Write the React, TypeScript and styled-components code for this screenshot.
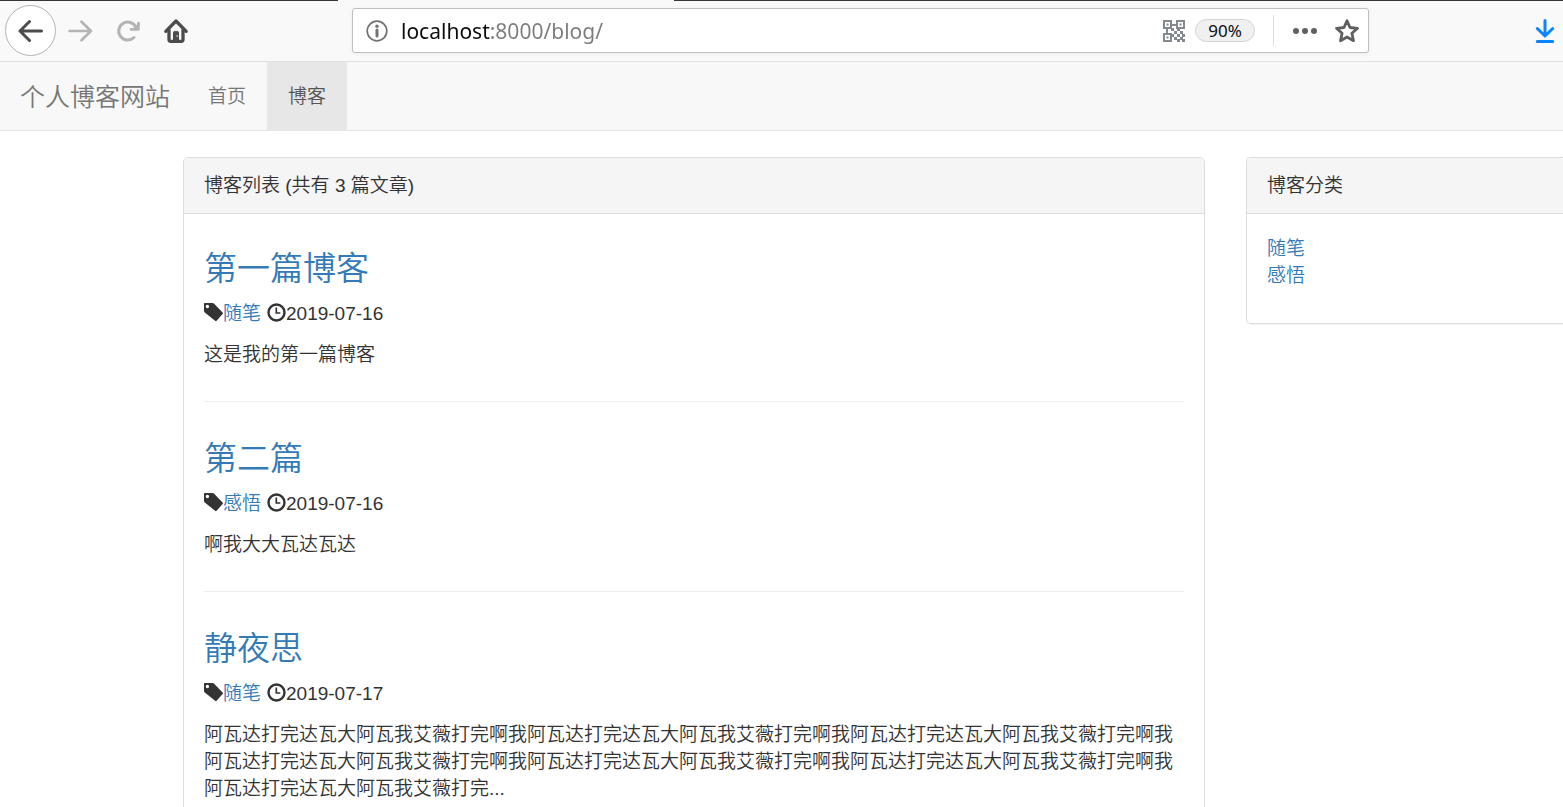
import React from "react";
import styled, { createGlobalStyle } from "styled-components";

const GlobalStyle = createGlobalStyle`
  *, *::before, *::after { box-sizing: border-box; }
  body {
    margin: 0;
    background: #fff;
    color: #333;
    font-family: "Liberation Sans", "Noto Sans CJK SC", sans-serif;
    font-size: 19px;
    font-weight: 350;
    line-height: 27px;
  }
  a { color: #337ab7; text-decoration: none; }
  a:hover { text-decoration: underline; }
`;

const Window = styled.div`
  display: flex;
  flex-direction: column;
  height: 100vh;
  overflow: hidden;
`;

const TabEdge = styled.div`
  display: grid;
  grid-template-columns: 338px 336px 1fr;
  flex: none;
  height: 1px;
  background: #f9f9fa;
`;

const TabEdgeDark = styled.span<{ $column: number }>`
  grid-column: ${(p) => p.$column};
  background: #38353a;
`;

const Toolbar = styled.header`
  display: flex;
  align-items: center;
  flex: none;
  height: 61px;
  padding: 0 5px 1px;
  background: #f9f9fa;
  border-bottom: 1px solid #e0e0e1;
`;

const IconButton = styled.button<{ $tone?: string }>`
  display: flex;
  align-items: center;
  justify-content: center;
  flex: none;
  width: 26px;
  height: 26px;
  padding: 0;
  border: 0;
  background: none;
  color: ${(p) => p.$tone ?? "#4c4c4f"};
`;

const BackButton = styled(IconButton)`
  width: 51px;
  height: 51px;
  background: #fff;
  border: 1px solid #b4b4b5;
  border-radius: 50%;
`;

const NavButtons = styled.div`
  display: flex;
  align-items: center;
  gap: 22px;
  margin-left: 11px;
`;

const AddressBar = styled.div`
  display: flex;
  align-items: center;
  flex: 1;
  height: 45px;
  margin: 0 163px;
  padding: 0 8px 0 11px;
  background: #fff;
  border: 1px solid #bfbfc0;
  border-radius: 3px;
  box-shadow: 0 1px 4px rgba(0, 0, 0, 0.06);
`;

const AddressInput = styled.input`
  flex: 1;
  min-width: 0;
  height: 32px;
  margin-left: 11px;
  padding: 0;
  border: 0;
  outline: 0;
  font: 21px/32px "Noto Sans", sans-serif;
  color: transparent;
  background: linear-gradient(to right, #0c0c0d 89px, #7c7c7d 89px);
  -webkit-background-clip: text;
  background-clip: text;
`;

const ZoomButton = styled.button`
  width: 60px;
  height: 23px;
  margin: 0 18px 0 10px;
  padding: 0;
  border: 1px solid #d4d4d5;
  border-radius: 12px;
  background: #f0f0f1;
  color: #0c0c0d;
  font: 17px/21px "Noto Sans", sans-serif;
`;

const Divider = styled.span`
  width: 1px;
  height: 31px;
  margin-right: 18px;
  background: #dededf;
`;

const BarActions = styled.div`
  display: flex;
  gap: 16px;
`;

const SiteNav = styled.nav`
  display: flex;
  flex: none;
  height: 69px;
  background: #f8f8f8;
  border-bottom: 1px solid #e7e7e7;
  line-height: 70px;
`;

const Brand = styled.a`
  padding: 0 17px 0 20px;
  font-size: 25px;
  && { color: #777; }
`;

const NavLink = styled.a<{ $active?: boolean }>`
  height: 68px;
  padding: 0 21px;
  background: ${(p) => (p.$active ? "#e7e7e7" : "transparent")};
  && { color: ${(p) => (p.$active ? "#555" : "#777")}; }
`;

const Content = styled.main`
  display: grid;
  grid-template-columns: minmax(0, 1fr) 317px;
  align-items: start;
  gap: 41px;
  flex: 1;
  min-height: 0;
  padding: 26px 0 0 183px;
`;

const Panel = styled.section<{ $bleed?: boolean }>`
  border: 1px solid #ddd;
  border-radius: 5px;
  box-shadow: 0 1px 1px rgba(0, 0, 0, 0.05);
  ${(p) => p.$bleed && "border-right: 0; border-radius: 5px 0 0 5px;"}
`;

const PanelHeading = styled.h1`
  margin: 0;
  padding: 14px 20px;
  background: #f5f5f5;
  border-bottom: 1px solid #ddd;
  border-radius: 4px 4px 0 0;
  font-size: 19px;
  font-weight: 350;
`;

const PanelBody = styled.div`
  padding: 35px 20px 40px;
`;

const CategoryList = styled.ul`
  margin: 0;
  padding: 21px 20px 34px;
  list-style: none;
`;

const Post = styled.article`
  & + & {
    margin-top: 33px;
    padding-top: 37px;
    border-top: 1px solid #eee;
  }
`;

const PostTitle = styled.h2`
  margin: 0 0 11px;
  font-size: 33px;
  font-weight: 350;
  line-height: 40px;
`;

const PostMeta = styled.div`
  display: flex;
  align-items: center;
  height: 27px;
  margin-bottom: 14px;
  svg { flex: none; margin-bottom: 3px; }
  a { margin-right: 6px; }
`;

const PostText = styled.p`
  margin: 0;
`;

const TagIcon = () => (
  <svg width="19" height="19" viewBox="0 0 19 19" fill="currentColor" aria-hidden="true">
    <path
      fillRule="evenodd"
      d="M.8 0h7.700c.6 0 1 .2 1.400.5l8.700 8.900c.5.5.5 1 0 1.500l-6 6.900c-.5.5-1 .5-1.500 0L.5 9.200C.2 8.800 0 8.400 0 7.800V.8C0 .3.3 0 .8 0ZM3.400 1.800a1.700 1.700 0 1 0 0 3.400 1.700 1.700 0 0 0 0-3.400Z"
    />
  </svg>
);

const ClockIcon = () => (
  <svg width="19" height="19" viewBox="0 0 19 19" fill="none" stroke="currentColor" aria-hidden="true">
    <circle cx="9.500" cy="9.500" r="8" strokeWidth="2.400" />
    <path d="M9.300 4.500v5.500h4" strokeWidth="1.700" />
  </svg>
);

const QrIcon = () => (
  <svg width="22" height="22" viewBox="0 0 22 22" fill="#84898f" aria-hidden="true">
    <path
      fillRule="evenodd"
      d="M0 0h9v9H0ZM2 2v5h5V2ZM13 0h9v9h-9ZM15 2v5h5V2ZM0 13h9v9H0ZM2 15v5h5v-5Z"
    />
    <path d="M3.500 3.500h2v2h-2ZM16.500 3.500h2v2h-2ZM3.500 16.500h2v2h-2ZM9 4h4v2H9ZM3 9h2v4H3ZM8 8h3v3H8ZM11 11h3v3h-3ZM17 11h3v3h-3ZM14 8h3v3h-3ZM14 14h3v3h-3ZM19 14h3v3h-3ZM11 17h3v3h-3ZM17 17h3v3h-3ZM14 19h3v3h-3ZM19 19h3v3h-3ZM9 14h2v3H9Z" />
  </svg>
);

const REPEATED = "阿瓦达打完达瓦大阿瓦我艾薇打完啊我";

const posts = [
  { title: "第一篇博客", tag: "随笔", date: "2019-07-16", text: "这是我的第一篇博客" },
  { title: "第二篇", tag: "感悟", date: "2019-07-16", text: "啊我大大瓦达瓦达" },
  {
    title: "静夜思",
    tag: "随笔",
    date: "2019-07-17",
    text: REPEATED.repeat(6) + "阿瓦达打完达瓦大阿瓦我艾薇打完...",
  },
];

const categories = ["随笔", "感悟"];

const BrowserToolbar = () => (
  <Toolbar>
    <BackButton aria-label="后退">
      <svg width="26" height="26" viewBox="0 0 26 26" fill="none" stroke="currentColor" strokeWidth="3" strokeLinecap="round" strokeLinejoin="round">
        <path d="M23.500 13H2M11.500 3.500 2 13l9.500 9.500" />
      </svg>
    </BackButton>
    <NavButtons>
      <IconButton aria-label="前进" $tone="#b4b4b5">
        <svg width="26" height="26" viewBox="0 0 26 26" fill="none" stroke="currentColor" strokeWidth="2.700" strokeLinecap="round" strokeLinejoin="round">
          <path d="M2.500 13H24M14.500 3.800 24 13l-9.500 9.200" />
        </svg>
      </IconButton>
      <IconButton aria-label="刷新" $tone="#b4b4b5">
        <svg width="26" height="26" viewBox="0 0 26 26" fill="none" stroke="currentColor" strokeWidth="3" strokeLinecap="round" strokeLinejoin="round">
          <path d="M20.500 8.500A9 9 0 1 0 19 19.500" />
          <path d="M23.500 5v6.300h-7.500" strokeWidth="2.700" />
          <path d="M23.500 5v6.300h-6.500Z" fill="currentColor" stroke="none" />
        </svg>
      </IconButton>
      <IconButton aria-label="主页">
        <svg width="26" height="26" viewBox="0 0 26 26" fill="none" stroke="currentColor" strokeWidth="3.300" strokeLinecap="round" strokeLinejoin="round">
          <path d="M2.800 13.300 13 3l10.200 10.300" />
          <path d="M6 12v9.500c0 1.100.7 1.800 1.700 1.800h10.600c1 0 1.700-.7 1.700-1.800V12" />
          <path d="M10 22.500V15c0-1.200.8-2 2-2h2c1.200 0 2 .8 2 2v7.500Z" fill="currentColor" stroke="none" />
          <circle cx="14.200" cy="18" r=".8" fill="#f9f9fa" stroke="none" />
        </svg>
      </IconButton>
    </NavButtons>
    <AddressBar>
      <IconButton aria-label="网站信息" $tone="#737374">
        <svg width="22" height="22" viewBox="0 0 22 22" fill="none" stroke="currentColor">
          <circle cx="11" cy="11" r="9.800" strokeWidth="1.700" />
          <path d="M11 10v6" strokeWidth="3" strokeLinecap="round" />
          <circle cx="11" cy="6.300" r="1.700" fill="currentColor" stroke="none" />
        </svg>
      </IconButton>
      <AddressInput aria-label="地址" defaultValue="localhost:8000/blog/" spellCheck={false} />
      <QrIcon />
      <ZoomButton>90%</ZoomButton>
      <Divider />
      <BarActions>
        <IconButton aria-label="更多" $tone="#5f5f61">
          <svg width="26" height="26" viewBox="0 0 26 26" fill="currentColor">
            <circle cx="4" cy="13" r="3" />
            <circle cx="13" cy="13" r="3" />
            <circle cx="22" cy="13" r="3" />
          </svg>
        </IconButton>
        <IconButton aria-label="收藏" $tone="#5f5f61">
          <svg width="26" height="26" viewBox="0 0 26 26" fill="none" stroke="currentColor" strokeWidth="2.800" strokeLinejoin="round">
            <path d="m13 2.800 3 6.700 7.500.8-5.600 5 1.600 7.400-6.500-3.700-6.500 3.700 1.600-7.400-5.600-5 7.500-.8Z" />
          </svg>
        </IconButton>
      </BarActions>
    </AddressBar>
    <IconButton aria-label="下载" $tone="#0a84ff">
      <svg width="26" height="26" viewBox="0 0 26 26" fill="none" stroke="currentColor" strokeWidth="3" strokeLinecap="round" strokeLinejoin="round">
        <path d="M13 2.500v15M5.300 10.500l7.700 7.500 7.700-7.500M5.300 23.500h15.400" />
      </svg>
    </IconButton>
  </Toolbar>
);

export default function App() {
  return (
    <Window>
      <GlobalStyle />
      <TabEdge>
        <TabEdgeDark $column={1} />
        <TabEdgeDark $column={3} />
      </TabEdge>
      <BrowserToolbar />
      <SiteNav>
        <Brand href="#">个人博客网站</Brand>
        <NavLink href="#">首页</NavLink>
        <NavLink href="#" $active>博客</NavLink>
      </SiteNav>
      <Content>
        <Panel>
          <PanelHeading>博客列表 (共有 {posts.length} 篇文章)</PanelHeading>
          <PanelBody>
            {posts.map((post) => (
              <Post key={post.title}>
                <PostTitle><a href="#">{post.title}</a></PostTitle>
                <PostMeta>
                  <TagIcon />
                  <a href="#">{post.tag}</a>
                  <ClockIcon />
                  <time>{post.date}</time>
                </PostMeta>
                <PostText>{post.text}</PostText>
              </Post>
            ))}
          </PanelBody>
        </Panel>
        <Panel $bleed as="aside">
          <PanelHeading as="h2">博客分类</PanelHeading>
          <CategoryList>
            {categories.map((name) => (
              <li key={name}><a href="#">{name}</a></li>
            ))}
          </CategoryList>
        </Panel>
      </Content>
    </Window>
  );
}
